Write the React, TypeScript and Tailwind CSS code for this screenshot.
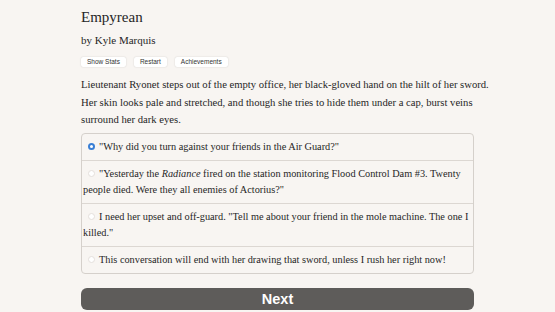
import { useState } from 'react'

const choices = [
    <>"Why did you turn against your friends in the Air Guard?"</>,
    <>
        "Yesterday the <i>Radiance</i> fired on the station monitoring Flood Control Dam #3. Twenty
        <br />
        people died. Were they all enemies of Actorius?"
    </>,
    <>
        I need her upset and off-guard. "Tell me about your friend in the mole machine. The one I
        <br />
        killed."
    </>,
    <>This conversation will end with her drawing that sword, unless I rush her right now!</>,
]

export default function App() {
    const [selected, setSelected] = useState(0)

    return (
        <div className="min-h-[312px] w-full bg-[#f8f5f2] text-[#262626] font-['Liberation_Serif',serif]">
            <div className="ml-[81px] w-[393px] pt-[8px]">
                <h1 className="text-[15px] leading-[18px]">Empyrean</h1>
                <div className="mt-[7px] text-[11px] leading-[14px]">by Kyle Marquis</div>

                <div className="mt-[10px] flex gap-[8px] font-['Liberation_Sans',sans-serif] text-[6.5px]">
                    {['Show Stats', 'Restart', 'Achievements'].map(label => (
                        <button
                            key={label}
                            className="h-[10px] rounded-[2px] bg-white px-[6px] leading-[10px] text-[#333] shadow-[0_0_1.5px_rgba(0,0,0,0.2)]"
                        >
                            {label}
                        </button>
                    ))}
                </div>

                <p className="mt-[9px] whitespace-nowrap text-[10.65px] leading-[17.5px]">
                    Lieutenant Ryonet steps out of the empty office, her black-gloved hand on the hilt of her sword.
                    <br />
                    Her skin looks pale and stretched, and though she tries to hide them under a cap, burst veins
                    <br />
                    surround her dark eyes.
                </p>

                <div className="mt-[4px] rounded-[4px] border border-[#d5d0cb] text-[10.3px] leading-[16px]">
                    {choices.map((text, i) => (
                        <label
                            key={i}
                            onClick={() => setSelected(i)}
                            className={`block cursor-pointer whitespace-nowrap px-[1px] py-[5px] ${i > 0 ? 'border-t border-[#dcd7d2]' : ''}`}
                        >
                            <span
                                className={`ml-[5px] mr-[4px] inline-block h-[7px] w-[7px] rounded-full bg-white align-[0px] ${
                                    selected === i
                                        ? 'border-[2px] border-[#3a7fd5]'
                                        : 'border border-[#e4e0dc]'
                                }`}
                            />
                            {text}
                        </label>
                    ))}
                </div>

                <button className="mt-[14px] h-[22px] w-full rounded-[6px] bg-[#5e5c5a] font-['Liberation_Sans',sans-serif] text-[14.5px] font-bold leading-[22px] text-white">
                    Next
                </button>
            </div>
        </div>
    )
}
